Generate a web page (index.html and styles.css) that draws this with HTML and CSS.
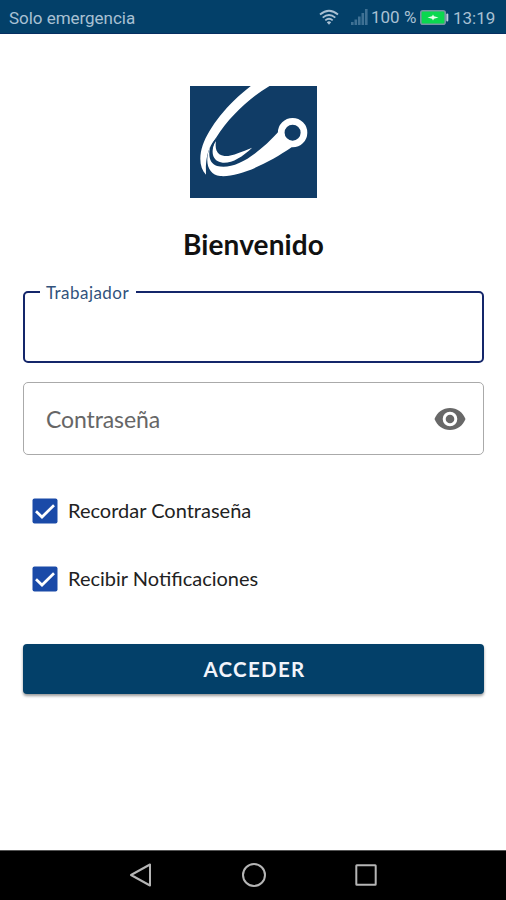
FILE: index.html
```html
<!DOCTYPE html>
<html lang="es">
<head>
<meta charset="utf-8">
<title>Bienvenido</title>
<link rel="stylesheet" href="styles.css">
</head>
<body>
<header class="status">
  <span class="carrier">Solo emergencia</span>
  <svg class="wifi" width="20" height="17" viewBox="0 0 20 17" fill="none" stroke="#a9c0d3" stroke-width="1.8">
    <path d="M1 5.5Q10-2 19 5.5M3.7 8.6Q10 3.3 16.3 8.6M6.3 11.4Q10 8.2 13.7 11.4"/><path d="M7.8 13.2Q10 11.5 12.2 13.2L10 15.8Z" fill="#a9c0d3" stroke="none"/>
  </svg>
  <svg class="signal" width="17" height="16" viewBox="0 0 17 16" fill="#3f7194">
    <path d="M0 13h2.6v3H0zM3.5 10.5h2.6V16H3.5zM7 7.5h2.6V16H7zM10.5 4h2.6v12h-2.6zM14 0h2.6v16H14z"/>
  </svg>
  <span class="percent">100 %</span>
  <svg class="battery" width="29" height="15" viewBox="0 0 29 15">
    <rect x=".8" y=".8" width="24.4" height="13.4" rx="2" fill="#0bd84f" stroke="#7893a4" stroke-width="1.6"/>
    <rect x="26.3" y="3.5" width="2" height="8" rx="1" fill="#c0d0dc"/>
    <path d="M7.5 7.5 12 6.3 13 4.5 14 6.3 18.5 7.5 14 8.7 13 10.5 12 8.7Z" fill="#e4ffe9"/>
  </svg>
  <span class="clock">13:19</span>
</header>
<main class="login">
  <svg class="logo" width="127" height="112" viewBox="31 19 380 336" preserveAspectRatio="none">
    <path fill="#103c66" d="M31 19h380v336H31z"/>
    <path fill="#fff" d="M213 19H269C207 56 150 110 109 174C94 194 76 218 79 285C60 266 57 232 69 197C88 143 143 72 213 19Z"/>
    <path fill="#fff" d="M110 176C104 206 109 226 134 229C159 230 185 216 217 204C187 232 157 251 129 249C97 246 90 215 110 176Z"/>
    <path fill="#fff" d="M93 197C83 228 91 252 112 259C165 273 235 224 300 152L335 203C267 250 177 294 121 289C86 285 71 247 93 197Z"/>
    <path fill="none" stroke="#103c66" stroke-width="5" d="M111 177C88 205 88 241 111 251C121 256 137 256 154 250"/>
    <circle cx="338" cy="159" r="34" fill="#103c66" stroke="#fff" stroke-width="20"/>
  </svg>
  <h1 class="title">Bienvenido</h1>
  <fieldset class="field field-active">
    <legend class="legend"><span class="legend-text">Trabajador</span></legend>
  </fieldset>
  <div class="field field-password">
    <span class="placeholder">Contraseña</span>
    <svg class="eye" width="32" height="22" viewBox="0 0 32 22">
      <path fill="#686868" fill-rule="evenodd" d="M16 0C9 0 3 4.400.5 11 3 17.600 9 22 16 22s13-4.400 15.500-11C29 4.400 23 0 16 0Zm0 18.300a7.300 7.300 0 1 1 0-14.600 7.300 7.300 0 0 1 0 14.600Z"/><circle cx="16" cy="11" r="4.300" fill="#686868"/>
    </svg>
  </div>
  <div class="option">
    <svg class="check" width="26" height="26" viewBox="0 0 26 26"><rect x=".5" y=".5" width="25" height="25" rx="2" fill="#1a4aa8"/><path d="M4 13.200 10 19 22 7.200" fill="none" stroke="#fff" stroke-width="2.700"/></svg>
    <span class="label">Recordar Contraseña</span>
  </div>
  <div class="option">
    <svg class="check" width="26" height="26" viewBox="0 0 26 26"><rect x=".5" y=".5" width="25" height="25" rx="2" fill="#1a4aa8"/><path d="M4 13.200 10 19 22 7.200" fill="none" stroke="#fff" stroke-width="2.700"/></svg>
    <span class="label label-notify">Recibir Notificaciones</span>
  </div>
  <button class="submit">ACCEDER</button>
</main>
<nav class="nav">
  <svg width="24" height="26" viewBox="0 0 24 26" fill="none" stroke="#b5b5b5" stroke-width="2"><path d="M2 13 21 2.500V23.500Z" stroke-linejoin="round"/></svg>
  <svg width="26" height="26" viewBox="0 0 26 26" fill="none" stroke="#b5b5b5" stroke-width="2"><circle cx="13" cy="13" r="11"/></svg>
  <svg width="24" height="26" viewBox="0 0 24 26" fill="none" stroke="#b5b5b5" stroke-width="2"><rect x="2.300" y="3.300" width="19.400" height="19.400" rx=".5"/></svg>
</nav>
</body>
</html>
```
FILE: styles.css
```css
* { box-sizing: border-box; }
body {
  margin: 0;
  height: 900px;
  display: flex;
  flex-direction: column;
  background: #fff;
  font-family: Lato, sans-serif;
}
.status {
  height: 34px;
  padding: 1px 11px 0 9px;
  display: flex;
  align-items: center;
  background: #034069;
  border-bottom: 1px solid #062f61;
  color: #a9c0d3;
  font-family: Roboto, sans-serif;
  font-size: 17px;
  white-space: nowrap;
}
.carrier { letter-spacing: -.03px; margin-right: auto; padding-top: 2px; }
.signal { margin: 0 3px 0 12px; }
.percent { width: 45px; font-size: 17px; }
.battery { margin: 0 4px; }
.clock { width: 42px; font-size: 17px; padding-top: 1px; }
.login {
  flex: 1;
  padding: 52px 22px 0 23px;
  display: flex;
  flex-direction: column;
}
.logo { align-self: center; }
.title {
  margin: 28px 0 0;
  height: 36px;
  line-height: 36px;
  text-align: center;
  font-size: 28px;
  letter-spacing: .1px;
  font-weight: 700;
  color: #111;
}
.field {
  margin: 0;
  padding: 0;
  border-radius: 5px;
}
.field-active {
  margin-top: 20px;
  height: 81px;
  border: 2px solid #14266a;
  padding-left: 15px;
}
.legend {
  height: 19px;
  width: 96px;
  padding: 0 0 0 6px;
  line-height: 22px;
  font-size: 17px;
  letter-spacing: .45px;
  color: #31527c;
}
.field-password {
  margin-top: 19px;
  height: 73px;
  padding: 0 17px 0 22px;
  display: flex;
  align-items: center;
  justify-content: space-between;
  border: 1.500px solid #aaa;
}
.placeholder { font-size: 23px; letter-spacing: -.1px; color: #666; }
.option {
  height: 26px;
  margin: 43px 0 0 9px;
  display: flex;
  align-items: center;
  gap: 10px;
  font-size: 20px;
  color: #222;
}
.option + .option { margin-top: 42px; }
.label { margin-top: -3px; }
.label-notify { letter-spacing: 0; }
.submit {
  margin-top: 52px;
  padding: 0 0 0 2px;
  height: 50px;
  border: 0;
  border-radius: 4px;
  background: #034069;
  box-shadow: 0 2px 3px rgba(0, 0, 0, .4);
  color: #f2f4fb;
  font: 700 20.500px Lato, sans-serif;
  letter-spacing: 1.300px;
}
.nav {
  height: 50px;
  padding: 0 128px 0 129px;
  display: flex;
  align-items: center;
  justify-content: space-between;
  background: #000;
  border-top: 1px solid #555;
}
.nav svg { margin-top: -2px; }
```
